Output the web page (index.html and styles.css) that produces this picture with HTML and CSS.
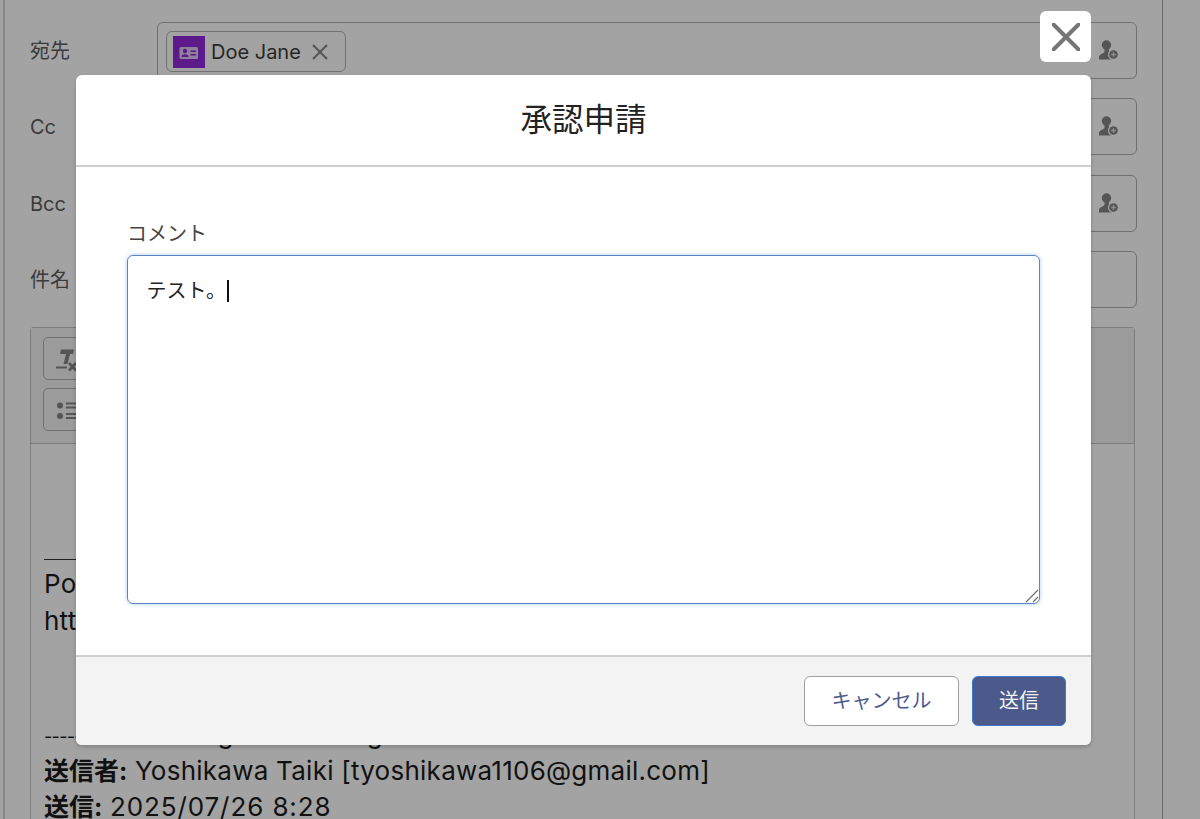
FILE: index.html
```html
<!DOCTYPE html>
<html lang="ja">
<head>
<meta charset="utf-8">
<title>承認申請</title>
<link rel="stylesheet" href="styles.css">
</head>
<body>
<main class="panel">
  <div class="row">
    <span class="row-label">宛先</span>
    <div class="field">
      <span class="chip">
        <span class="chip-icon">
          <svg viewBox="0 0 32 32" width="32" height="32"><path fill="#fff" fill-opacity=".75" d="M8 11h15.500a1.500 1.500 0 0 1 1.500 1.500v9a1.500 1.500 0 0 1-1.500 1.500H8a1.500 1.500 0 0 1-1.500-1.500v-9A1.500 1.500 0 0 1 8 11z"/><circle cx="12" cy="15" r="2.200" fill="#9029d8"/><path fill="#9029d8" d="M8.500 21c0-1.800 1.300-2.800 3.500-2.800s3.500 1 3.500 2.800z"/><path fill="#9029d8" d="M17.500 14.500h5.500v1.600h-5.500zM17.500 18h5.500v1.600h-5.500z"/></svg>
        </span>
        <span class="chip-text">Doe Jane</span>
        <svg class="chip-x" viewBox="0 0 16 16" width="16" height="16"><path d="M1 1l14 14M15 1L1 15" stroke="#858585" stroke-width="2" fill="none"/></svg>
      </span>
      <span class="person"><svg viewBox="0 0 20 20" width="20" height="20"><use href="#person-add"/></svg></span>
    </div>
  </div>
  <div class="row">
    <span class="row-label">Cc</span>
    <div class="field"><span class="person"><svg viewBox="0 0 20 20" width="20" height="20"><use href="#person-add"/></svg></span></div>
  </div>
  <div class="row">
    <span class="row-label">Bcc</span>
    <div class="field"><span class="person"><svg viewBox="0 0 20 20" width="20" height="20"><use href="#person-add"/></svg></span></div>
  </div>
  <div class="row">
    <span class="row-label">件名</span>
    <div class="field"></div>
  </div>
  <section class="editor">
    <div class="toolbar">
      <span class="tool">
        <svg viewBox="0 0 24 26" width="24" height="26"><path fill="#858585" d="M6 3.500h13l-1 4.500h-3l-2.500 10H8.500l2.500-10H5z"/><path d="M1 21.500h11" stroke="#858585" stroke-width="2"/><path d="M14 17l7 7.500M21 17l-7 7.500" stroke="#858585" stroke-width="2.600"/></svg>
      </span>
      <span class="tool">
        <svg viewBox="0 0 22 22" width="22" height="22"><circle cx="5" cy="6.500" r="3" fill="#858585"/><circle cx="5" cy="17" r="3" fill="#858585"/><path d="M11 4.500h11M11 8.500h11M11 15h11M11 19h11" stroke="#858585" stroke-width="2"/></svg>
      </span>
    </div>
    <div class="mail">
      <hr class="mail-rule">
      <p>Powered by Salesforce</p>
      <p>https://www.salesforce.com</p>
      <p class="mail-orig"><span class="dashes">------------------</span>Original Message<span class="dashes">------------------</span></p>
      <p><b>送信者:</b> Yoshikawa Taiki [tyoshikawa1106@gmail.com]</p>
      <p class="mail-last"><b>送信:</b> <span class="mail-date">2025/07/26 8:28</span></p>
    </div>
  </section>
</main>

<svg class="defs" width="0" height="0" aria-hidden="true">
  <symbol id="person-add" viewBox="0 0 20 20">
    <circle cx="7.500" cy="5" r="4.700" fill="#858585"/>
    <path fill="#858585" d="M5.500 8h4l.8 3.600C12.300 12.600 13.500 13.500 13.500 15c0 1.500 0 4.500-1 4.500H1C0 19.500-.5 18.800-.5 18c0-3.500 4.800-4.300 6-6z"/>
    <circle cx="14.500" cy="14.500" r="5.500" fill="#fff"/>
    <circle cx="14.500" cy="14.500" r="4.300" fill="#858585"/>
    <path d="M12.200 14.500h4.600M14.500 12.200v4.600" stroke="#fff" stroke-opacity=".75" stroke-width="1.400"/>
  </symbol>
</svg>

<div class="backdrop"></div>

<button class="close" type="button" aria-label="閉じる">
  <svg viewBox="0 0 28 28" width="28" height="28"><path d="M1.500 1.500l25 25M26.500 1.500l-25 25" stroke="#767676" stroke-width="4" stroke-linecap="round" fill="none"/></svg>
</button>

<div class="modal" role="dialog">
  <header class="modal-head"><h1>承認申請</h1></header>
  <div class="modal-body">
    <label class="comment-label">コメント</label>
    <div class="comment">
      <span>テスト。</span><span class="caret"></span>
      <svg class="grip" viewBox="0 0 14 14" width="14" height="14"><path d="M1 13L13 1M8 13l5-5" stroke="#6e6e6e" stroke-width="1.200" fill="none"/></svg>
    </div>
  </div>
  <footer class="modal-foot">
    <button class="btn btn-neutral" type="button">キャンセル</button>
    <button class="btn btn-brand" type="button">送信</button>
  </footer>
</div>
</body>
</html>
```
FILE: styles.css
```css
* { box-sizing: border-box; }
html, body {
  margin: 0;
  height: 819px;
  overflow: hidden;
  background: #fff;
}
body {
  position: relative;
  font-family: Inter, "Noto Sans CJK JP", sans-serif;
  color: #222;
}
.defs { position: absolute; }

.panel {
  margin-left: 3px;
  width: 1160px;
  height: 819px;
  padding: 22px 25px 0 25px;
  border-left: 2px solid #d4d4d4;
  border-right: 1px solid #a8a8a8;
  display: flex;
  flex-direction: column;
  overflow: hidden;
}
.row {
  display: flex;
  align-items: flex-start;
  height: 57px;
  margin-bottom: 19.300px;
  flex: none;
}
.row-label {
  width: 127px;
  flex: none;
  font-size: 20px;
  line-height: 58px;
  color: #5c5c5c;
}
.field {
  width: 980px;
  flex: none;
  height: 57px;
  border: 1px solid #b0b0b0;
  border-radius: 6px;
  padding: 8px;
  display: flex;
  align-items: flex-start;
  justify-content: space-between;
}
.chip {
  display: flex;
  align-items: center;
  width: 180px;
  height: 41px;
  padding: 0 6px;
  border: 1px solid #b0b0b0;
  border-radius: 6px;
}
.chip-icon {
  width: 32px;
  height: 32px;
  background: #9029d8;
  display: flex;
  flex: none;
}
.chip-text {
  margin-left: 6px;
  font-size: 20px;
  color: #3c3c3c;
}
.chip-x { margin-left: 11px; flex: none; }
.person {
  margin-left: auto;
  margin-right: 9px;
  margin-top: 9px;
  width: 20px;
  height: 20px;
}
.person svg { overflow: visible; }
.editor {
  margin-top: 0;
  width: 1105px;
  flex: none;
  border: 1px solid #c4c4c4;
  border-bottom: 0;
  border-radius: 4px 4px 0 0;
}
.toolbar {
  height: 116px;
  padding: 9px 12px;
  background: #f3f3f5;
  border-bottom: 1px solid #c4c4c4;
  display: flex;
  flex-direction: column;
  gap: 8px;
}
.tool {
  width: 60px;
  height: 43px;
  border: 1px solid #b0b0b0;
  border-radius: 5px;
  display: flex;
  align-items: center;
  padding-left: 11px;
}
.mail {
  padding: 115px 13px 0;
  font-size: 26px;
  letter-spacing: .25px;
  line-height: 37.300px;
  color: #1c1c1c;
}
.mail p { margin: 0; white-space: nowrap; }
.mail-rule {
  width: 300px;
  margin: 0 0 5px;
  border: 0;
  border-top: 1px solid #333;
}
.mail .mail-orig { margin-top: 75px; }
.dashes {
  font-size: 18px;
  line-height: 1;
  letter-spacing: -.7px;
}
.mail-date { letter-spacing: .9px; }
.mail b {
  font-size: 25px;
  line-height: 1;
  font-weight: 700;
  letter-spacing: 0;
}
.mail .mail-last {
  line-height: 24px;
  margin-top: 6px;
}

.backdrop {
  position: absolute;
  inset: 0;
  background: rgba(0, 0, 0, .36);
}
.close {
  position: absolute;
  left: 1040px;
  top: 11px;
  width: 51px;
  height: 51px;
  padding: 0;
  border: 0;
  border-radius: 6px;
  background: #fff;
  display: flex;
  align-items: center;
  justify-content: center;
}
.modal {
  position: absolute;
  left: 76px;
  top: 75px;
  width: 1015px;
  height: 670px;
  display: flex;
  flex-direction: column;
  background: #fff;
  border-radius: 6px;
  box-shadow: 0 2px 4px rgba(0, 0, 0, .2);
  overflow: hidden;
}
.modal-head {
  height: 92px;
  flex: none;
  padding-bottom: 6px;
  border-bottom: 2px solid #cfcfcf;
  display: flex;
  align-items: center;
  justify-content: center;
}
.modal-head h1 {
  margin: 0;
  font-size: 31.500px;
  font-weight: 400;
  color: #222;
}
.modal-body {
  flex: 1;
  padding: 50px 51px 0;
  display: flex;
  flex-direction: column;
}
.comment-label {
  font-size: 20px;
  line-height: 34px;
  height: 38px;
  color: #444;
}
.comment {
  position: relative;
  width: 913px;
  height: 349px;
  padding: 19.500px 18.500px;
  font-size: 20px;
  line-height: 30px;
  color: #222;
  border: 1.500px solid #5f82c2;
  border-radius: 6px;
  box-shadow: 0 0 4px rgba(1, 118, 211, .35);
  display: flex;
  align-items: flex-start;
}
.caret {
  width: 2px;
  height: 22px;
  margin: 4.500px 0 0 1px;
  background: #111;
}
.grip {
  position: absolute;
  right: 0;
  bottom: 0;
}
.modal-foot {
  height: 90px;
  flex: none;
  border-top: 2px solid #cfcfcf;
  background: #f3f3f3;
  padding: 19px 25px 0 0;
  display: flex;
  justify-content: flex-end;
  align-items: flex-start;
  gap: 13px;
}
.btn {
  height: 50px;
  font: 400 20px Inter, "Noto Sans CJK JP", sans-serif;
  line-height: 46px;
  border-radius: 6px;
  padding: 0;
}
.btn-neutral {
  width: 155px;
  background: #fff;
  border: 1px solid #a0a0a0;
  color: #4b5b8c;
}
.btn-brand {
  width: 94px;
  background: #4b5a8a;
  border: 1px solid #3f78c9;
  color: #f4f4f4;
}
```
